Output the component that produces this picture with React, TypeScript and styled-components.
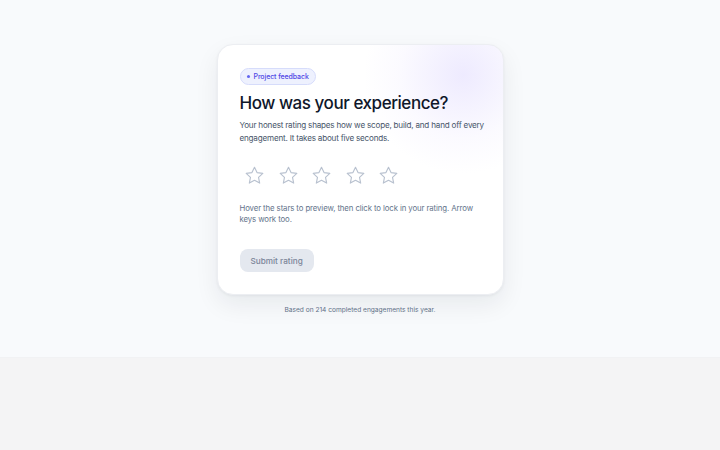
import React from 'react';
import styled, { createGlobalStyle } from 'styled-components';

const GlobalStyle = createGlobalStyle`
  html, body {
    margin: 0;
    padding: 0;
    background: #f4f4f5;
    font-family: Inter, "Noto Sans", sans-serif;
  }
`;

const Page = styled.main`
  min-height: 358px;
  background: #f8fafc;
  border-bottom: 1px solid #f1f2f4;
  box-sizing: border-box;
  padding-top: 44px;
  display: flex;
  flex-direction: column;
  align-items: center;
`;

const Card = styled.section`
  position: relative;
  overflow: hidden;
  width: 287px;
  box-sizing: border-box;
  padding: 23px 16px 22px 22px;
  background: #ffffff;
  border: 1px solid #eceef2;
  border-radius: 16px;
  box-shadow: 0 10px 24px rgba(15, 23, 42, 0.07), 0 1px 3px rgba(15, 23, 42, 0.05);

  &::before {
    content: '';
    position: absolute;
    top: -70px;
    right: -60px;
    width: 200px;
    height: 200px;
    border-radius: 50%;
    background: radial-gradient(circle, rgba(221, 214, 254, 0.5) 0%, rgba(237, 233, 254, 0.22) 45%, rgba(255, 255, 255, 0) 70%);
    pointer-events: none;
  }
`;

const Content = styled.div`
  position: relative;
  display: flex;
  flex-direction: column;
  align-items: flex-start;
`;

const Badge = styled.span`
  display: inline-flex;
  align-items: center;
  gap: 4px;
  height: 15px;
  padding: 0 6px;
  border-radius: 999px;
  background: #eef1fe;
  border: 1px solid #d6dcfb;
  color: #4f46e5;
  font-size: 7px;
  font-weight: 500;
  letter-spacing: -0.1px;
`;

const Dot = styled.span`
  width: 3px;
  height: 3px;
  border-radius: 50%;
  background: #6366f1;
`;

const Title = styled.h1`
  margin: 7px 0 0;
  font-size: 17px;
  font-weight: 500;
  letter-spacing: -0.45px;
  color: #0f172a;
  line-height: 22px;
`;

const Lead = styled.p`
  margin: 5px 0 0;
  font-size: 8.1px;
  letter-spacing: -0.2px;
  line-height: 13px;
  color: #475569;
`;

const Stars = styled.div`
  display: flex;
  gap: 11.5px;
  margin: 19px 0 0 4px;
`;

const StarButton = styled.button`
  padding: 0;
  border: none;
  background: none;
  width: 22px;
  height: 22px;
  cursor: pointer;
  display: flex;
  align-items: center;
  justify-content: center;
`;

const Hint = styled.p`
  margin: 17px 0 0;
  max-width: 240px;
  font-size: 7.8px;
  letter-spacing: -0.1px;
  line-height: 11px;
  color: #64748b;
`;

const Submit = styled.button`
  margin-top: 24px;
  height: 23px;
  padding: 0 11px;
  border: none;
  border-radius: 8px;
  background: #e4e8ef;
  color: #7b8599;
  font-family: inherit;
  font-size: 8.2px;
  font-weight: 500;
`;

const Footnote = styled.p`
  margin: 11px 0 0;
  font-size: 6.6px;
  color: #64748b;
`;

const Star: React.FC = () => (
  <svg width="21" height="21" viewBox="0 0 24 24" fill="none" stroke="#b8c1cf" strokeWidth="1.3" strokeLinejoin="round">
    <path d="M12 2.6l2.9 6.1 6.6.8-4.9 4.6 1.3 6.6L12 17.4l-5.9 3.3 1.3-6.6-4.9-4.6 6.6-.8z" />
  </svg>
);

const App: React.FC = () => {
  return (
    <>
      <GlobalStyle />
      <Page>
        <Card>
          <Content>
            <Badge>
              <Dot />
              Project feedback
            </Badge>
            <Title>How was your experience?</Title>
            <Lead>
              Your honest rating shapes how we scope, build, and hand off every engagement. It takes about five seconds.
            </Lead>
            <Stars>
              {[1, 2, 3, 4, 5].map((n) => (
                <StarButton key={n} aria-label={`${n} star`}>
                  <Star />
                </StarButton>
              ))}
            </Stars>
            <Hint>Hover the stars to preview, then click to lock in your rating. Arrow keys work too.</Hint>
            <Submit disabled>Submit rating</Submit>
          </Content>
        </Card>
        <Footnote>Based on 214 completed engagements this year.</Footnote>
      </Page>
    </>
  );
};

export default App;
